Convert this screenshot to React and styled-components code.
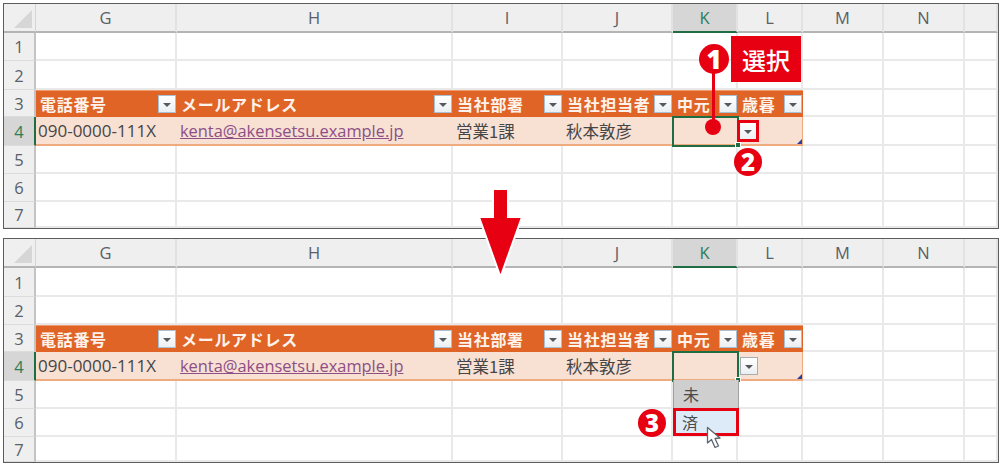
import React from 'react'
import styled, { createGlobalStyle } from 'styled-components'

const GlobalStyle = createGlobalStyle`
  html, body {
    margin: 0;
    background: #fff;
  }
  body {
    font-family: 'Open Sans', 'Noto Sans CJK JP', sans-serif;
  }
`

const red = '#e60012'
const green = '#1f6e43'
const columns = ['G', 'H', 'I', 'J', 'K', 'L', 'M', 'N', '']
const headers = ['電話番号', 'メールアドレス', '当社部署', '当社担当者', '中元', '歳暮']
const record = ['090-0000-111X', 'kenta@akensetsu.example.jp', '営業1課', '秋本敦彦', '', '']

const Page = styled.div`
  position: relative;
  width: 1000px;
  height: 468px;
  box-sizing: border-box;
  padding: 3px 1px 0 3px;
  display: flex;
  flex-direction: column;
  gap: 9px;
  overflow: hidden;
`

const Sheet = styled.div`
  position: relative;
  display: grid;
  grid-template-columns: 32px 141px 276px 110px 110px 65px 65px 81px 81px 1fr;
  grid-template-rows: ${(p) => p.$rows};
  border: 1px solid #5c5c5c;
  background: #fff;
`

const Corner = styled.div`
  position: relative;
  background: #efefef;
  border-right: 1px solid #d4d4d4;
  border-bottom: 2px solid #b4b4b4;
  &::after {
    content: '';
    position: absolute;
    right: 3px;
    bottom: 3px;
    width: 18px;
    height: 18px;
    background: #d6d6d6;
    clip-path: polygon(100% 0, 100% 100%, 0 100%);
  }
`

const ColumnHead = styled.div`
  display: flex;
  align-items: center;
  justify-content: center;
  font-size: 16.5px;
  color: ${(p) => (p.$active ? '#2f7d57' : '#596068')};
  background: ${(p) => (p.$active ? '#d6d6d6' : '#efefef')};
  border-right: 2px solid #e2e2e2;
  border-bottom: 2px solid ${(p) => (p.$active ? green : '#b4b4b4')};
`

const RowHead = styled.div`
  display: flex;
  align-items: center;
  justify-content: center;
  font-size: 16.5px;
  color: ${(p) => (p.$active ? '#2f7d57' : '#596068')};
  background: ${(p) => (p.$active ? '#d6d6d6' : '#efefef')};
  border-right: 2px solid ${(p) => (p.$active ? green : '#c4c4c4')};
  border-bottom: 1px solid #dcdcdc;
`

const Cell = styled.div`
  border-right: 2px solid #e9e9e9;
  border-bottom: 2px solid #e9e9e9;
`

const TitleCell = styled.div`
  display: flex;
  align-items: center;
  justify-content: space-between;
  min-width: 0;
  padding: 0 1px 0 4px;
  background: #e06426;
  border-top: 1px solid #ee9a6c;
  color: #fdf3ec;
  font-family: 'Noto Sans CJK JP', sans-serif;
  font-size: 16px;
  font-weight: 700;
  letter-spacing: 0.7px;
  line-height: 16px;
  padding-bottom: 1px;
  white-space: nowrap;
`

const DataCell = styled.div`
  position: relative;
  display: flex;
  align-items: center;
  min-width: 0;
  padding-left: ${(p) => (p.$flush ? '2px' : '3px')};
  background: #f8e0d3;
  border-bottom: 2px solid #f0aa80;
  font-size: 16.5px;
  color: #464646;
  white-space: nowrap;
  font-family: 'Noto Sans CJK JP', sans-serif;
`

const PhoneText = styled.span`
  font-family: 'Open Sans', sans-serif;
  font-size: 17px;
`

const MailLink = styled.span`
  font-family: 'Open Sans', sans-serif;
  font-size: 16.4px;
  color: #8c4f86;
  text-decoration: underline;
`

const SelectedCell = styled(DataCell)`
  outline: 2px solid ${green};
  outline-offset: -1px;
  z-index: 2;
  &::after {
    content: '';
    position: absolute;
    right: -3px;
    bottom: -4px;
    width: 6px;
    height: 6px;
    background: ${green};
    border: 1px solid #fff;
    box-sizing: border-box;
  }
`

const ResizeCell = styled(DataCell)`
  border-right: 1px solid #f0aa80;
  &::after {
    content: '';
    position: absolute;
    right: 0;
    bottom: 0;
    width: 5px;
    height: 5px;
    background: #2a3f9e;
    clip-path: polygon(100% 0, 100% 100%, 0 100%);
  }
`

const FilterButton = styled.div`
  flex: none;
  display: flex;
  align-items: center;
  justify-content: center;
  box-sizing: border-box;
  width: 18px;
  height: 18px;
  background: linear-gradient(#fff, #eceff2);
  border: 1px solid ${(p) => (p.$plain ? '#a6adb3' : '#a9c0d4')};
  &::before {
    content: '';
    border-left: 4px solid transparent;
    border-right: 4px solid transparent;
    border-top: 4px solid #55595e;
    margin-top: 2px;
  }
`

const MarkedFilter = styled(FilterButton)`
  width: 22px;
  height: 22px;
  margin-left: -3px;
  border: 3px solid ${red};
  position: relative;
  z-index: 3;
`

const DropList = styled.div`
  position: absolute;
  top: 100%;
  left: 0;
  right: -1px;
  z-index: 3;
  display: flex;
  flex-direction: column;
  margin-top: 1px;
`

const DropItem = styled.div`
  box-sizing: border-box;
  height: 28px;
  display: flex;
  align-items: center;
  padding-left: ${(p) => (p.$picked ? '6px' : '9px')};
  background: ${(p) => (p.$picked ? '#dcebf7' : '#cfcfcf')};
  border: ${(p) => (p.$picked ? `3px solid ${red}` : '1px solid #a0a0a0')};
  border-width: ${(p) => (p.$picked ? '3px' : '0 1px')};
  color: #4a4a4a;
  font-size: 16px;
  font-family: 'Noto Sans CJK JP', sans-serif;
`

const Marker = styled.div`
  position: absolute;
  left: ${(p) => p.$x}px;
  top: ${(p) => p.$y}px;
  z-index: 5;
  width: ${(p) => p.$size}px;
  height: ${(p) => p.$size}px;
  margin: ${(p) => -p.$size / 2}px 0 0 ${(p) => -p.$size / 2}px;
  display: flex;
  align-items: center;
  justify-content: center;
  border-radius: 50%;
  background: ${red};
  color: #fff;
  font-family: 'Open Sans', sans-serif;
  font-size: ${(p) => p.$size - 4}px;
  font-weight: 800;
  line-height: 1;
`

const Leader = styled.div`
  position: absolute;
  left: 708px;
  top: 65px;
  z-index: 5;
  width: 3px;
  height: 58px;
  background: ${red};
  &::after {
    content: '';
    position: absolute;
    left: -7px;
    bottom: -8px;
    width: 16px;
    height: 16px;
    border-radius: 50%;
    background: ${red};
  }
`

const Badge = styled.div`
  position: absolute;
  left: 727px;
  top: 32px;
  z-index: 5;
  width: 70px;
  height: 46px;
  display: flex;
  align-items: center;
  justify-content: center;
  background: ${red};
  color: #fff;
  font-family: 'Noto Sans CJK JP', sans-serif;
  font-size: 24px;
  font-weight: 500;
`

const DownArrow = styled.svg`
  position: absolute;
  left: 474px;
  top: 185px;
  z-index: 6;
`

const Pointer = styled.svg`
  position: absolute;
  left: 702px;
  top: 187px;
  z-index: 6;
`

function FilterTitle({ text, plain }) {
  return (
    <TitleCell>
      {text}
      <FilterButton $plain={plain} />
    </TitleCell>
  )
}

function SheetBlock({ rows, picking }) {
  return (
    <Sheet $rows={rows}>
      <Corner />
      {columns.map((c, i) => (
        <ColumnHead key={i} $active={c === 'K'}>
          {c}
        </ColumnHead>
      ))}

      {[1, 2].map((n) => (
        <React.Fragment key={n}>
          <RowHead>{n}</RowHead>
          {columns.map((c, i) => (
            <Cell key={i} />
          ))}
        </React.Fragment>
      ))}

      <RowHead>3</RowHead>
      {headers.map((h) => (
        <FilterTitle key={h} text={h} />
      ))}
      <Cell />
      <Cell />
      <Cell />

      <RowHead $active>4</RowHead>
      <DataCell $flush><PhoneText>{record[0]}</PhoneText></DataCell>
      <DataCell><MailLink>{record[1]}</MailLink></DataCell>
      <DataCell>{record[2]}</DataCell>
      <DataCell>{record[3]}</DataCell>
      <SelectedCell>
        {picking && (
          <DropList>
            <DropItem>未</DropItem>
            <DropItem $picked>済</DropItem>
          </DropList>
        )}
      </SelectedCell>
      <ResizeCell $flush>
        {picking ? <FilterButton $plain /> : <MarkedFilter />}
      </ResizeCell>
      <Cell />
      <Cell />
      <Cell />

      {[5, 6, 7].map((n) => (
        <React.Fragment key={n}>
          <RowHead>{n}</RowHead>
          {columns.map((c, i) => (
            <Cell key={i} />
          ))}
        </React.Fragment>
      ))}

      {picking ? (
        <Marker $x={648} $y={184} $size={28}>3</Marker>
      ) : (
        <>
          <Marker $x={710} $y={55} $size={30}>1</Marker>
          <Leader />
          <Badge>選択</Badge>
          <Marker $x={744} $y={158} $size={28}>2</Marker>
        </>
      )}
      {picking && (
        <Pointer width="18" height="24" viewBox="0 0 18 24">
          <path
            d="M1.5 1.5 L1.5 17 L5.5 13.5 L9 21.5 L12.5 20 L9 12.5 L14 12 Z"
            fill="#fff"
            stroke="#5c6670"
            strokeWidth="1.3"
            strokeLinejoin="round"
          />
        </Pointer>
      )}
    </Sheet>
  )
}

function App() {
  return (
    <Page>
      <GlobalStyle />
      <SheetBlock rows="29px 28px 29px 27px 29px 28px 28px 26px" />
      <SheetBlock rows="29px 29px 28px 27px 29px 28px 28px 25px" picking />
      <DownArrow width="52" height="96" viewBox="0 0 52 96">
        <path
          d="M19 4 H34 V32 H48 L26.5 92 L5 32 H19 Z"
          fill={red}
          stroke="#fff"
          strokeWidth="2"
        />
      </DownArrow>
    </Page>
  )
}

export default App
